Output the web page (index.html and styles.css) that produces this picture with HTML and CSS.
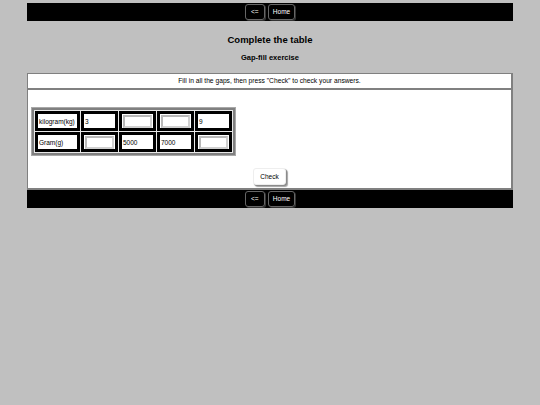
FILE: index.html
```html
<!DOCTYPE html>
<html>
<head>
<meta charset="utf-8">
<link rel="stylesheet" href="styles.css">
</head>
<body>
<div class="page">
  <div class="nav nav-top">
    <span class="navbtn">&lt;=</span>
    <span class="navbtn">Home</span>
  </div>
  <h1 class="title">Complete the table</h1>
  <h2 class="subtitle">Gap-fill exercise</h2>
  <div class="box">
    <div class="instr">Fill in all the gaps, then press "Check" to check your answers.</div>
    <div class="content">
      <table class="grid">
        <tr>
          <td class="label">kilogram(kg)</td>
          <td class="val">3</td>
          <td class="gap"><span class="field"></span></td>
          <td class="gap"><span class="field"></span></td>
          <td class="val">9</td>
        </tr>
        <tr>
          <td class="label">Gram(g)</td>
          <td class="gap"><span class="field"></span></td>
          <td class="val">5000</td>
          <td class="val">7000</td>
          <td class="gap"><span class="field"></span></td>
        </tr>
      </table>
      <div class="actions"><span class="check">Check</span></div>
    </div>
  </div>
  <div class="nav nav-bottom">
    <span class="navbtn">&lt;=</span>
    <span class="navbtn">Home</span>
  </div>
</div>
</body>
</html>
```

FILE: styles.css
```css
html, body {
  margin: 0;
  padding: 0;
  background: #c0c0c0;
  font-family: "Liberation Sans", Arial, sans-serif;
}
.page {
  width: 486px;
  margin: 0 auto;
  padding-top: 3px;
}
.nav {
  background: #000;
  height: 18px;
  display: flex;
  justify-content: center;
  align-items: center;
  gap: 3px;
}
.navbtn {
  color: #fff;
  font-size: 6.5px;
  border: 1px solid #666;
  border-radius: 3px;
  height: 14px;
  line-height: 14px;
  padding: 0 4px;
  min-width: 10px;
  text-align: center;
  box-shadow: 1px 1px 0 #333;
}
.title {
  margin: 13px 0 0;
  font-size: 9.5px;
  font-weight: bold;
  text-align: center;
  line-height: 12px;
}
.subtitle {
  margin: 7px 0 0;
  font-size: 7.5px;
  font-weight: bold;
  text-align: center;
  line-height: 10px;
}
.box {
  margin-top: 10px;
  background: #fff;
  border: 1px solid #808080;
  border-bottom-width: 2px;
  border-right-width: 2px;
}
.instr {
  font-size: 6.7px;
  text-align: center;
  height: 14px;
  line-height: 14px;
  border-bottom: 2px solid #808080;
}
.content {
  padding: 18px 3px 3px;
}
.grid {
  border-collapse: separate;
  border-spacing: 1px;
  background: #e8e8e8;
  border: 2px solid #808080;
  box-shadow: 0 0 0 1px #a8a8a8;
  margin-left: 1px;
}
.grid td {
  border: 3px solid #000;
  background: #fff;
  height: 14px;
  padding: 0 1px;
  font-size: 6.5px;
  vertical-align: middle;
  white-space: nowrap;
}
.grid td.label {
  width: 37px;
}
.grid td.val, .grid td.gap {
  width: 29px;
}
.field {
  display: block;
  height: 9px;
  border: 2px solid #d0d0d0;
  border-top-color: #b8b8b8;
  border-left-color: #b8b8b8;
}
.actions {
  display: flex;
  justify-content: center;
  margin-top: 13px;
}
.check {
  font-size: 6.5px;
  height: 15px;
  line-height: 15px;
  padding: 0 6px;
  border-radius: 3px;
  background: #fff;
  box-shadow: 1px 1px 1px #888, 2px 2px 1px #aaa;
  border: 1px solid #eee;
}
```
